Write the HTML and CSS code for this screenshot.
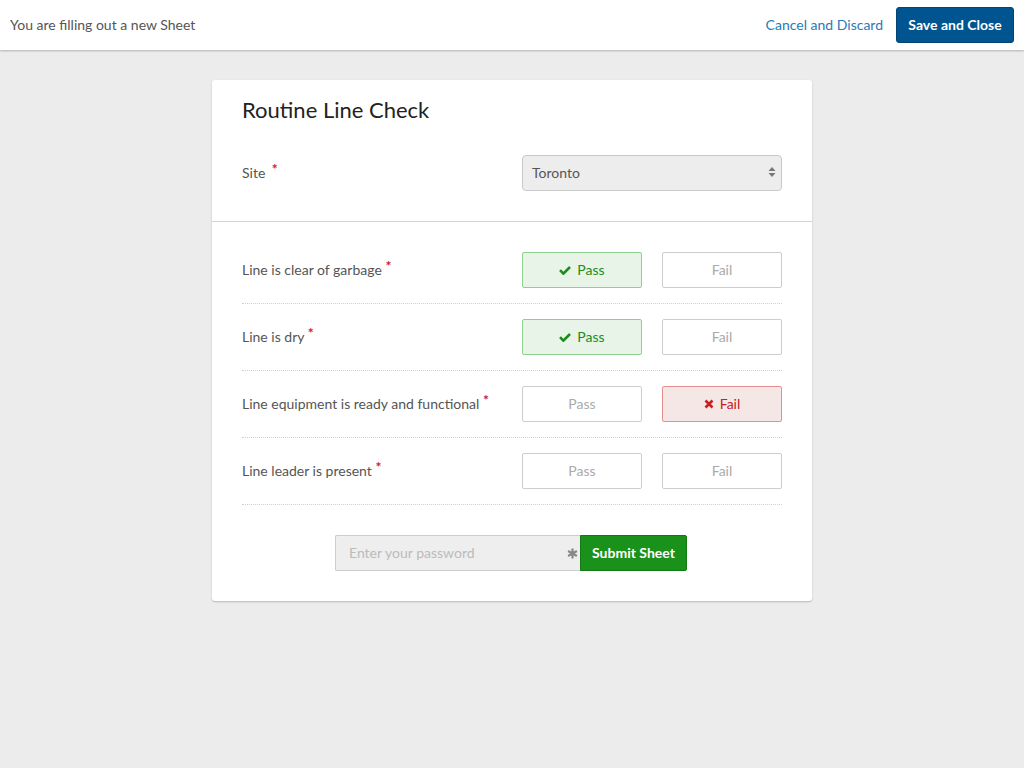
FILE: index.html
```html
<!DOCTYPE html>
<html>
<head>
<meta charset="utf-8">
<link rel="stylesheet" href="styles.css">
</head>
<body>
<header class="topbar">
  <div class="topbar-msg">You are filling out a new Sheet</div>
  <div class="topbar-actions">
    <a class="link-cancel">Cancel and Discard</a>
    <button class="btn-save">Save and Close</button>
  </div>
</header>
<main class="page">
  <section class="card">
    <div class="card-head">
      <h1 class="title">Routine Line Check</h1>
      <div class="field-row">
        <div class="label">Site <span class="req req-site">*</span></div>
        <div class="select">
          <span>Toronto</span>
          <svg class="select-arrows" width="8" height="12" viewBox="0 0 8 12"><path d="M4 1 L7.5 5 H0.5 Z M4 11 L7.5 7 H0.5 Z" fill="#777"/></svg>
        </div>
      </div>
    </div>
    <div class="card-body">
      <div class="check-row">
        <div class="label">Line is clear of garbage <span class="req">*</span></div>
        <div class="choices">
          <div class="choice pass-on"><svg class="ico" width="12" height="10" viewBox="0 0 12 10"><path d="M1 5.2 L4.4 8.6 L11 2" fill="none" stroke="#1c8c1c" stroke-width="2.6"/></svg>Pass</div>
          <div class="choice">Fail</div>
        </div>
      </div>
      <div class="check-row">
        <div class="label">Line is dry <span class="req">*</span></div>
        <div class="choices">
          <div class="choice pass-on"><svg class="ico" width="12" height="10" viewBox="0 0 12 10"><path d="M1 5.2 L4.4 8.6 L11 2" fill="none" stroke="#1c8c1c" stroke-width="2.6"/></svg>Pass</div>
          <div class="choice">Fail</div>
        </div>
      </div>
      <div class="check-row">
        <div class="label">Line equipment is ready and functional <span class="req">*</span></div>
        <div class="choices">
          <div class="choice">Pass</div>
          <div class="choice fail-on"><svg class="ico" width="10" height="10" viewBox="0 0 10 10"><path d="M1.5 1.5 L8.5 8.5 M8.5 1.5 L1.5 8.5" fill="none" stroke="#c62020" stroke-width="2.6"/></svg>Fail</div>
        </div>
      </div>
      <div class="check-row">
        <div class="label">Line leader is present <span class="req">*</span></div>
        <div class="choices">
          <div class="choice">Pass</div>
          <div class="choice">Fail</div>
        </div>
      </div>
      <div class="submit-row">
        <div class="pw">
          <span class="pw-ph">Enter your password</span>
          <svg class="pw-ico" width="11" height="11" viewBox="0 0 12 12"><path d="M6 0.5 V11.5 M1.2 3.2 L10.8 8.8 M10.8 3.2 L1.2 8.8" stroke="#888" stroke-width="2.4"/></svg>
        </div>
        <button class="btn-submit">Submit Sheet</button>
      </div>
    </div>
  </section>
</main>
</body>
</html>
```
FILE: styles.css
```css
* { box-sizing: border-box; }
html, body { margin: 0; padding: 0; }
body {
  background: #ececec;
  font-family: Lato, "Open Sans", "Liberation Sans", sans-serif;
  font-size: 14px;
  color: #555;
  height: 768px;
}
.topbar {
  height: 50px;
  background: #fff;
  display: flex;
  align-items: center;
  justify-content: space-between;
  padding: 0 10px 2px;
  box-shadow: 0 1px 2px rgba(0,0,0,0.25);
  position: relative;
}
.topbar-msg { color: #555; font-size: 14px; }
.topbar-actions { display: flex; align-items: center; gap: 13px; }
.link-cancel { color: #2b78b8; font-size: 14px; }
.btn-save {
  height: 36px;
  width: 118px;
  border: 1px solid #034676;
  border-radius: 3px;
  background: #00548f;
  color: #fff;
  font-family: inherit;
  font-weight: bold;
  font-size: 14px;
  padding: 0 0 2px;
  margin-top: 2px;
}
.page {
  padding-top: 30px;
  display: flex;
  justify-content: center;
}
.card {
  width: 600px;
  background: #fff;
  border-radius: 3px;
  box-shadow: 0 1px 2px rgba(0,0,0,0.22);
}
.card-head {
  padding: 15px 30px 30px;
  border-bottom: 1px solid #d3d3d3;
}
.title {
  margin: 0 0 30px;
  font-size: 22px;
  line-height: 30px;
  font-weight: normal;
  color: #222;
}
.field-row {
  display: flex;
  align-items: center;
  justify-content: space-between;
}
.label { color: #555; font-size: 14px; padding-bottom: 2px; }
.req {
  color: #c8202a;
  font-size: 14px;
  font-weight: bold;
  position: relative;
  top: -4px;
}
.req-site { margin-left: 3px; }
.select {
  width: 260px;
  height: 36px;
  border: 1px solid #c9c9c9;
  border-radius: 4px;
  background: #ededed;
  display: flex;
  align-items: center;
  justify-content: space-between;
  padding: 0 5px 2px 9px;
  color: #555;
}
.card-body { padding: 15px 30px 30px; }
.check-row {
  display: flex;
  align-items: center;
  justify-content: space-between;
  padding: 15px 0;
  border-bottom: 1px dotted #d0d0d0;
}
.choices { display: flex; gap: 20px; }
.choice {
  width: 120px;
  height: 36px;
  border: 1px solid #cdcdcd;
  border-radius: 2px;
  background: #fff;
  color: #aaa;
  display: flex;
  align-items: center;
  justify-content: center;
  gap: 6px;
  font-size: 14px;
  padding-bottom: 2px;
}
.pass-on {
  background: #e7f4e7;
  border-color: #8fd08f;
  color: #1c8c1c;
}
.fail-on {
  background: #f6e7e7;
  border-color: #e58e8e;
  color: #c62020;
}
.ico { display: block; margin-top: 2px; }
.submit-row {
  display: flex;
  justify-content: center;
  padding-top: 30px;
  padding-right: 2px;
}
.pw {
  width: 245px;
  height: 36px;
  border: 1px solid #cdcdcd;
  border-right: none;
  border-radius: 2px 0 0 2px;
  background: #eee;
  display: flex;
  align-items: center;
  justify-content: space-between;
  padding: 0 2px 2px 13px;
}
.pw-ph { color: #bbb; }
.pw-ico { margin-top: 2px; }
.btn-submit {
  width: 107px;
  height: 36px;
  border: 1px solid #127812;
  border-radius: 0 2px 2px 0;
  background: #1a911a;
  color: #fff;
  font-family: inherit;
  font-weight: bold;
  font-size: 14px;
  padding: 0 0 2px;
}
```
